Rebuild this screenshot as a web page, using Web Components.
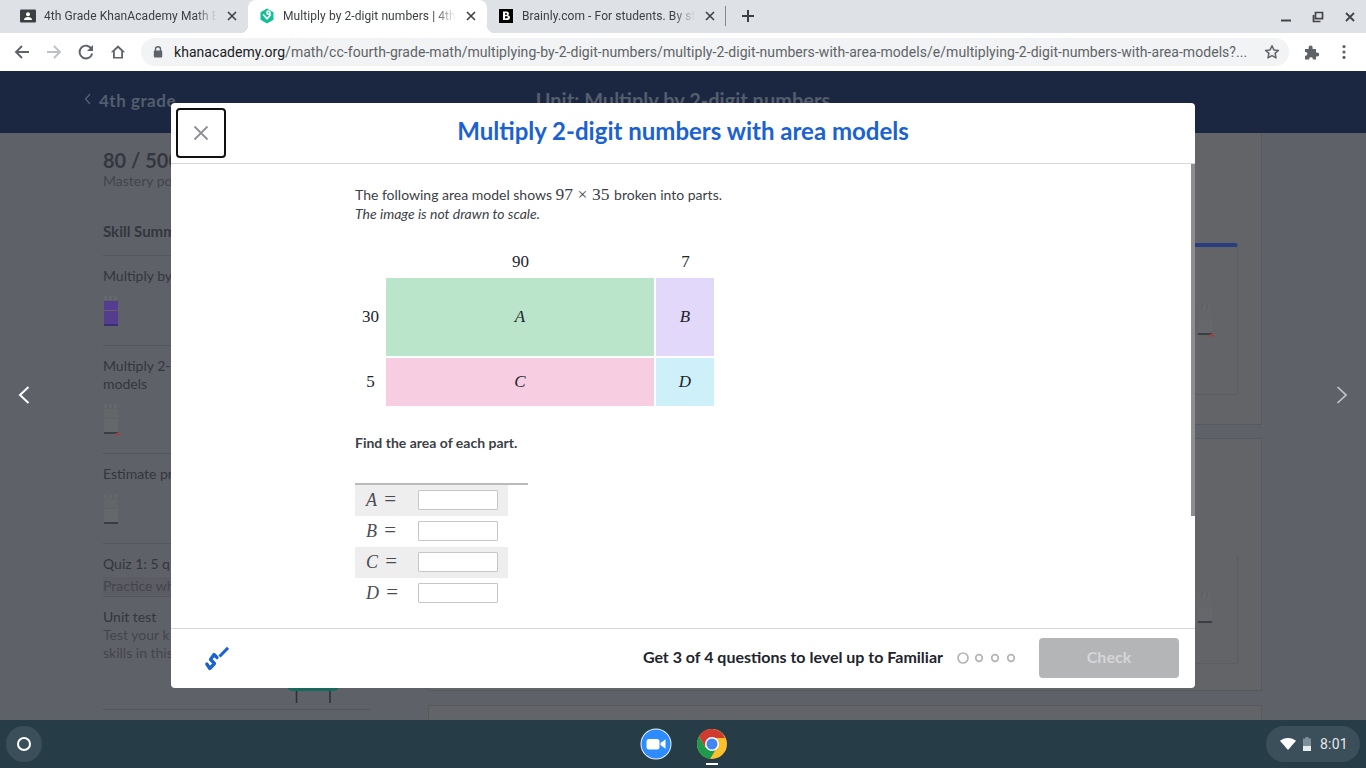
<!DOCTYPE html>
<html lang="en"><head><meta charset="utf-8"><title>Multiply 2-digit numbers with area models</title>
<style>
html,body{margin:0;padding:0;width:1366px;height:768px;overflow:hidden;background:#5f6168}
</style></head><body>
<app-shell></app-shell>
<script>
function el(name, css, html, setup){
  customElements.define(name, class extends HTMLElement{
    connectedCallback(){
      if(this.shadowRoot) return;
      const r=this.attachShadow({mode:'open'});
      r.innerHTML='<style>'+css+'</style>'+(typeof html==='function'?html(this):html);
      if(setup) setup(r,this);
    }
  });
}
const X='<svg width="10" height="10" viewBox="0 0 10 10"><path d="M1 1l8 8M9 1l-8 8" stroke="#3c4043" stroke-width="1.6" fill="none"/></svg>';

el('browser-tab',`
:host{display:flex;align-items:center;width:239px;height:33px;box-sizing:border-box;padding:0 11px 1px 11px;position:relative;font:12px Roboto,sans-serif;letter-spacing:.08px;color:#3c4043}
:host([active]){background:#fff;border-radius:8px 8px 0 0;color:#3c4043}
:host([active])::before,:host([active])::after{content:"";position:absolute;bottom:0;width:8px;height:8px;background:radial-gradient(circle at 0 0,transparent 8px,#fff 8.5px)}
:host([active])::before{left:-8px}
:host([active])::after{right:-8px;transform:scaleX(-1)}
.ic{width:16px;height:16px;flex:none;display:flex}
.t{flex:1;margin-left:8px;white-space:nowrap;overflow:hidden;-webkit-mask-image:linear-gradient(90deg,#000 calc(100% - 24px),transparent calc(100% - 2px));mask-image:linear-gradient(90deg,#000 calc(100% - 24px),transparent calc(100% - 2px))}
.x{width:10px;height:10px;flex:none;margin-left:8px;display:flex}
`,t=>`<span class="ic"><slot name="icon"></slot></span><span class="t"><slot></slot></span><span class="x">${X}</span>`);

el('tab-strip',`
:host{display:flex;align-items:flex-start;height:33px;background:#dee1e6;padding-left:9px;box-sizing:border-box}
.sep{width:1px;height:20px;background:#80868b;margin:6px 0 0 -1px}
.plus{margin:9px 0 0 15px;width:14px;height:14px;display:flex}
.sp{flex:1}
.win{display:flex;gap:16px;padding:9px 8px 0 0}
.win span{width:16px;height:16px;display:flex;align-items:center;justify-content:center}
`,`<slot></slot><span class="sep"></span>
<span class="plus"><svg width="14" height="14" viewBox="0 0 14 14"><path d="M7 1v12M1 7h12" stroke="#3c4043" stroke-width="2"/></svg></span>
<span class="sp"></span>
<span class="win">
<span><svg width="12" height="12" viewBox="0 0 12 12"><path d="M1 9.500h10" stroke="#444" stroke-width="2"/></svg></span>
<span><svg width="12" height="12" viewBox="0 0 12 12"><path d="M3.500 1.500h7v6.200h-7zM1.500 4v6.500h7" stroke="#444" stroke-width="1.700" fill="none"/></svg></span>
<span><svg width="12" height="12" viewBox="0 0 12 12"><path d="M2 2l8 8M10 2l-8 8" stroke="#444" stroke-width="1.800"/></svg></span>
</span>`);

el('browser-toolbar',`
:host{display:flex;align-items:center;height:38px;background:#fff;box-sizing:border-box;padding:0 0 0 12px}
.nav{display:flex;gap:12px;align-items:center;margin-right:13px;flex:none}
.nav span{width:20px;height:20px;display:flex}
.omni{display:flex;align-items:center;flex:none;width:1148px;height:28px;border-radius:14px;background:#f1f3f4;box-sizing:border-box;padding:0 9px 0 11px}
.url{font:14px Roboto,sans-serif;color:#5f6368;margin-left:10px;white-space:nowrap;flex:1;overflow:hidden;letter-spacing:.047px}
.url b{font-weight:400;color:#202124}
.end{display:flex;align-items:center;margin-left:15px;gap:16px;flex:none}
svg{flex:none}
`,`<div class="nav">
<span><svg width="20" height="20"><path d="M17 10H4.500M10 4l-6 6 6 6" stroke="#5f6368" stroke-width="1.900" fill="none"/></svg></span>
<span><svg width="20" height="20"><path d="M3 10h12.500M10 4l6 6-6 6" stroke="#bdc1c6" stroke-width="1.900" fill="none"/></svg></span>
<span><svg width="20" height="20"><path d="M15.600 7A6.400 6.400 0 1 0 16.200 11.500" stroke="#5f6368" stroke-width="1.900" fill="none"/><path d="M17 3v6h-6z" fill="#5f6368"/></svg></span>
<span><svg width="20" height="20"><path d="M10 3.200L2.800 10.200H5V16.600h10V10.200h2.200zM6.800 15V9l3.200-3 3.200 3v6z" fill="#5f6368"/></svg></span>
</div>
<div class="omni">
<svg width="12" height="14" viewBox="0 0 12 14"><path d="M3.500 6V4.300a2.500 2.500 0 0 1 5 0V6" stroke="#5f6368" stroke-width="1.400" fill="none"/><rect x="1.800" y="5.600" width="8.400" height="7" rx="1" fill="#5f6368"/></svg>
<span class="url"><b>khanacademy.org</b>/math/cc-fourth-grade-math/multiplying-by-2-digit-numbers/multiply-2-digit-numbers-with-area-models/e/multiplying-2-digit-numbers-with-area-models?...</span>
<svg width="16" height="16" viewBox="0 0 16 16"><path d="M8 1.800l1.900 4.100 4.500.5-3.300 3 .9 4.400L8 11.600l-4 2.200.9-4.400-3.300-3 4.500-.5z" stroke="#5f6368" stroke-width="1.500" fill="none" stroke-linejoin="round"/></svg>
</div>
<div class="end">
<svg width="16" height="16" viewBox="0 0 16 16"><path d="M1 5h3.600V3.600a2 2 0 0 1 4 0V5H12v3.500h1.200a2 2 0 0 1 0 4H12V15.500H8.800v-1a1.900 1.900 0 0 0-3.600 0v1H1v-3.800h1a2 2 0 0 0 0-3.800H1z" fill="#5f6368"/></svg>
<svg width="16" height="16" viewBox="0 0 16 16"><circle cx="8" cy="2.600" r="1.600" fill="#5f6368"/><circle cx="8" cy="8" r="1.600" fill="#5f6368"/><circle cx="8" cy="13.400" r="1.600" fill="#5f6368"/></svg>
</div>`);

el('skill-bars',`
:host{display:block;position:relative;width:14px;margin-left:1px;height:31px}
i{display:block;width:14px;margin-bottom:1px;background:#646569}
.a{height:4px;background:repeating-linear-gradient(90deg,#66676b 0 3px,#606167 3px 5px)}
.b{height:9px;margin-top:1px}
.c{height:13px;background:#66676b;margin-bottom:0}
.l{height:2px;background:#3b3d45;margin:0}
:host([kind=p]) .b,:host([kind=p]) .c{background:#543d8f}
:host([kind=p]) .l{background:#3e2e70}
:host([kind=r]) .t{position:absolute;left:11px;bottom:-1px;width:5px;height:3px;border-radius:2px;background:#94464f}
`,`<i class="a"></i><i class="b"></i><i class="c"></i><i class="l"></i><span class="t"></span>`);

el('skill-row',`
:host{display:block;box-sizing:border-box;border-bottom:1px solid #55565d;font:14px/18px Lato,sans-serif;color:#33363e;padding-top:11px}
`,`<slot></slot>`);

el('side-bar',`
:host{display:block;width:267px;margin-left:103px;flex:none;color:#33363e;font-family:Lato,sans-serif;position:relative}
.score{font:700 20px/24px Lato,sans-serif;margin-top:15px;color:#34373f}
.mp{font:14px/18px Lato,sans-serif;color:#43454c}
.sum{font:700 15px/18px Lato,sans-serif;margin:32px 0 0;padding-bottom:15px;border-bottom:1px solid #55565d}
.r1{height:90px}.r2{height:108px}.r3{height:90px}
.sk{margin-top:11px}
.q{height:53px;border-bottom:1px solid #55565d;box-sizing:border-box;padding-top:11px;font-size:14px;line-height:18px}
.q div+div{color:#43454c;margin-top:4px;background:#5c5d64}
.u{height:113px;border-bottom:1px solid #55565d;box-sizing:border-box;padding-top:11px;position:relative;font-size:14px;line-height:18px}
.u div+div{color:#43454c}
.seat{position:absolute;left:184px;top:84px;width:52px;height:24px}
`,`<div class="score">80 / 500</div><div class="mp">Mastery points</div>
<div class="sum">Skill Summary</div>
<skill-row class="r1">Multiply by<skill-bars class="sk" kind="p"></skill-bars></skill-row>
<skill-row class="r2">Multiply 2-<br>models<skill-bars class="sk" kind="r"></skill-bars></skill-row>
<skill-row class="r3">Estimate pr<skill-bars class="sk"></skill-bars></skill-row>
<div class="q"><div>Quiz 1: 5 q</div><div>Practice wh</div></div>
<div class="u"><div>Unit test</div><div>Test your k</div><div>skills in this</div>
<svg class="seat" viewBox="0 0 52 24"><path d="M0 0h52v5a5 5 0 0 1-5 5H5a5 5 0 0 1-5-5z" fill="#17695c"/><path d="M9.500 10v12M43 10v12" stroke="#2c2f36" stroke-width="1.500"/></svg></div>`);

el('main-cards',`
:host{display:block;width:834px;margin-left:58px;flex:none;position:relative}
.c{box-sizing:border-box;border:1px solid #58595f;border-top:0;background:#636468;position:relative}
.c1{height:292px}
.c2{height:253px;margin-top:13px;border-top:1px solid #58595f}
.c3{height:40px;margin-top:14px;border-top:1px solid #58595f}
.inner{position:absolute;left:0;width:809px;border-right:1px solid #5c5d62;border-bottom:1px solid #5c5d62;box-sizing:border-box}
.in1{top:110px;height:152px;border-top:4px solid #2a3d80;border-radius:3px 3px 0 0}
.in2{top:117px;height:108px}
.b{position:absolute;left:768px}
`,`<div class="c c1"><div class="inner in1"></div><skill-bars class="b" kind="r" style="top:172px"></skill-bars></div>
<div class="c c2"><div class="inner in2"></div><skill-bars class="b" style="top:154px"></skill-bars></div>
<div class="c c3"></div>`);

el('course-nav',`
:host{display:block;height:62px;background:#1b2740;position:relative;font-family:Lato,sans-serif;color:#535d6e}
.row{display:flex;height:62px;padding-left:84px;box-sizing:border-box}
.back{display:flex;align-items:flex-start;gap:8px;font:700 17px/20px Lato,sans-serif;padding-top:20px;letter-spacing:.5px;white-space:nowrap}
.back svg{margin-top:2px}
.t{position:absolute;left:0;right:0;top:17px;text-align:center;font:700 20px/24px Lato,sans-serif}
`,`<div class="row"><span class="back"><svg width="7" height="12" viewBox="0 0 7 12"><path d="M6 1L1.500 6 6 11" stroke="#555f70" stroke-width="1.300" fill="none"/></svg>4th grade</span></div><div class="t">Unit: Multiply by 2-digit numbers</div>`);

el('area-model',`
:host{display:grid;grid-template-columns:29px 268px 58px;grid-template-rows:29px 78px 48px;gap:2px;width:359px;margin-top:0;font:16px "Liberation Serif",serif;color:#21242c}
span{display:flex;align-items:center;justify-content:center}
.l{font-size:17px;padding-left:1px}
em{font-size:17px}
.a{background:#bbe5ca}.b{background:#e2d8f9}.c{background:#f7cde1}.d{background:#cdf0f9}
`,`<span></span><span class="l">90</span><span class="l">7</span>
<span class="l" style="padding-left:2px">30</span><span class="a"><em>A</em></span><span class="b"><em>B</em></span>
<span class="l" style="padding-left:2px">5</span><span class="c"><em>C</em></span><span class="d"><em>D</em></span>`);

el('answer-row',`
:host{display:flex;align-items:center;width:153px;height:31px;box-sizing:border-box;padding-left:11px}
:host([shade]){background:#eee}
.m{width:52px;font:italic 18px "Liberation Serif",serif;color:#4a4c53;white-space:nowrap}
.m i{font-style:normal;font-size:21px;line-height:18px;margin-left:2px}
input{width:80px;height:20px;box-sizing:border-box;border:1px solid #c6c6c6;background:#fff;margin:-2px 0 0;padding:0;border-radius:1px}
`,t=>`<span class="m">${t.getAttribute('v')}<i> =</i></span><input aria-label="${t.getAttribute('v')}">`);

el('exercise-body',`
:host{display:block;flex:1;min-height:0;position:relative;box-sizing:border-box;padding:21px 0 0 184px;font:14px/19px Lato,sans-serif;color:#3c3f46}
p{margin:0}
.m{font:17.500px/16px "Liberation Serif",serif;color:#3c3f46;margin-right:1px}
.m s{text-decoration:none;margin:0 4.500px}
.sc{font-style:italic;font-size:14px}
area-model{margin-top:24px}
.find{font-weight:700;margin-top:27px;font-size:14px}
.tbl{margin-top:31px;width:173px;border-top:2px solid #bbb;padding-top:0}
.bar{position:absolute;right:0;top:0;width:4px;height:352px;background:#8d8d8d}
`,`<p>The following area model shows <span class="m">97<s>×</s>35</span> broken into parts.</p>
<p class="sc">The image is not drawn to scale.</p>
<area-model></area-model>
<p class="find">Find the area of each part.</p>
<div class="tbl"><answer-row shade v="A"></answer-row><answer-row v="B"></answer-row><answer-row shade v="C"></answer-row><answer-row v="D"></answer-row></div>
<div class="bar"></div>`);

el('modal-dialog',`
:host{position:absolute;left:171px;top:32px;width:1024px;height:585px;background:#fff;border-radius:4px;display:flex;flex-direction:column;overflow:hidden;font-family:Lato,sans-serif}
header{height:61px;flex:none;box-sizing:border-box;border-bottom:1px solid #d8d8da;display:flex;align-items:center;justify-content:center;position:relative}
h1{margin:0 0 5px;font:700 24px/30px Lato,sans-serif;color:#1b62d1}
.close{position:absolute;left:5px;top:5px;width:50px;height:50px;box-sizing:border-box;border:2px solid #111;border-radius:4px;display:flex;align-items:center;justify-content:center;background:#fff}
footer{height:60px;flex:none;box-sizing:border-box;border-top:1px solid #d8d8da;display:flex;align-items:center;padding:0 16px 2px 32px}
.msg{font:700 16px/20px Lato,sans-serif;color:#21242c;margin:-2px 0 0 auto}
.dots{display:flex;align-items:center;margin:0 22px 0 14px}
.btn{width:140px;height:40px;border-radius:4px;background:#b4b5b7;color:#d5d6d7;font:700 16px/38px Lato,sans-serif;text-align:center}
`,`<header><div class="close"><svg width="16" height="16" viewBox="0 0 16 16"><path d="M1.500 1.500l13 13M14.500 1.500l-13 13" stroke="#8f9096" stroke-width="1.800"/></svg></div><h1>Multiply 2-digit numbers with area models</h1></header>
<exercise-body></exercise-body>
<footer>
<svg width="26" height="26" viewBox="0 0 26 26"><path d="M3.800 19L6.800 23.500 11.500 18.500 7.500 14.500 11 9.500 14 12.500" stroke="#1b62d1" stroke-width="3.300" fill="none" stroke-linecap="round" stroke-linejoin="round"/><path d="M16.500 11.500L25 2.800" stroke="#1b62d1" stroke-width="3"/></svg>
<span class="msg">Get 3 of 4 questions to level up to Familiar</span>
<span class="dots"><svg width="60" height="14" viewBox="0 0 60 14" fill="none" stroke="#b5b5b5" stroke-width="1.700"><circle cx="6" cy="7" r="5"/><circle cx="22" cy="7" r="3.300"/><circle cx="38" cy="7" r="3.300"/><circle cx="54" cy="7" r="3.300"/></svg></span>
<span class="btn">Check</span></footer>`);

el('page-view',`
:host{display:block;height:649px;position:relative;overflow:hidden;background:#5f6168}
.body{display:flex;height:587px}
.arr{position:absolute;top:315px}
.l{left:18px}.r{left:1336px}
`,`<course-nav></course-nav>
<div class="body"><side-bar></side-bar><main-cards></main-cards></div>
<svg class="arr l" width="12" height="18" viewBox="0 0 12 18"><path d="M10.500 1L2 9l8.500 8" stroke="#fff" stroke-width="2" fill="none"/></svg>
<svg class="arr r" width="12" height="18" viewBox="0 0 12 18"><path d="M1.500 1L10 9l-8.500 8" stroke="#c4c5c8" stroke-width="1.700" fill="none"/></svg>
<modal-dialog></modal-dialog>`);

el('os-shelf',`
:host{display:flex;align-items:center;height:48px;background:#263c47;position:relative;font:14px Roboto,sans-serif;color:#e4e8ea}
.lau{width:36px;height:36px;border-radius:50%;background:#3a4f59;margin-left:6px;display:flex;align-items:center;justify-content:center}
.apps{position:absolute;left:640px;top:8px;display:flex;gap:24px}
.apps svg{display:block}
.dot{position:absolute;left:66px;top:35px;width:12px;height:2px;background:#fff}
.tray{margin-left:auto;margin-right:6px;width:94px;height:36px;border-radius:18px;background:#3a4f59;display:flex;align-items:center;box-sizing:border-box;padding-left:14px}
.tm{margin-left:8px;letter-spacing:.2px}
`,`<span class="lau"><svg width="16" height="16" viewBox="0 0 16 16"><circle cx="8" cy="8" r="6" stroke="#fff" stroke-width="2" fill="none"/></svg></span>
<div class="apps">
<svg width="32" height="32" viewBox="0 0 32 32"><circle cx="16" cy="16" r="15.500" fill="#e7f1fb"/><circle cx="16" cy="16" r="14.500" fill="#2d8cff"/><rect x="6.500" y="11" width="13" height="10.500" rx="2.500" fill="#fff"/><path d="M20.500 15l5-3.800v9.600l-5-3.800z" fill="#fff"/></svg>
<svg width="32" height="32" viewBox="0 0 32 32"><circle cx="16" cy="16" r="15" fill="#fbc02d"/><path d="M16 1A15 15 0 0 0 3 8.500L9 19l7-9h13A15 15 0 0 0 16 1z" fill="#d2392f"/><path d="M3 8.500A15 15 0 0 0 14 30.900L20 21l-8-1-3-1z" fill="#1e9a4c"/><circle cx="16" cy="16" r="7" fill="#fff"/><circle cx="16" cy="16" r="5.500" fill="#4385f0"/></svg>
<span class="dot"></span></div>
<div class="tray">
<svg width="16" height="12" viewBox="0 0 16 12"><path d="M0 2.800C2 1.100 5 0 8 0s6 1.100 8 2.800L8 12z" fill="#fff"/></svg>
<svg width="10" height="14" viewBox="0 0 10 14" style="margin-left:6px"><path d="M3.500 0h3v1.500H9V14H1V1.500h2.500z" fill="#7f8f97"/><rect x="1" y="9" width="8" height="5" fill="#e5edf0"/></svg>
<span class="tm">8:01</span></div>`);

const cls='<svg slot="icon" width="16" height="16" viewBox="0 0 16 16"><rect y="1.500" width="16" height="13" rx="1" fill="#3c4043"/><circle cx="8" cy="6.300" r="2" fill="#fff"/><path d="M4 12c0-2 2-2.900 4-2.900s4 .9 4 2.900z" fill="#fff"/></svg>';
const ka='<svg slot="icon" width="16" height="16" viewBox="0 0 16 16"><path d="M8 .5l6.500 3.700v7.600L8 15.500l-6.500-3.700V4.200z" fill="#14bf96"/><path d="M4.200 6.500L8 10.800l3.800-4.300M8 4.600a1.500 1.500 0 1 1 0 .1" stroke="#fff" stroke-width="1.700" fill="none"/></svg>';
const br='<svg slot="icon" width="16" height="16" viewBox="0 0 16 16"><rect x="1" y="1" width="14" height="14" fill="#000"/><path d="M5 3.500h4a2 2 0 0 1 1 3.700 2.300 2.300 0 0 1-1 4.800H5zM7 5.200v1.500h1.500a.75.75 0 0 0 0-1.500zM7 8.300v2h1.800a1 1 0 0 0 0-2z" fill="#fff" fill-rule="evenodd"/></svg>';

el('app-shell',`:host{display:flex;flex-direction:column;width:1366px;height:768px;overflow:hidden}`,
`<tab-strip>
<browser-tab>${cls}4th Grade KhanAcademy Math E</browser-tab>
<browser-tab active>${ka}Multiply by 2-digit numbers | 4th</browser-tab>
<browser-tab>${br}Brainly.com - For students. By st</browser-tab>
</tab-strip>
<browser-toolbar></browser-toolbar>
<page-view></page-view>
<os-shelf></os-shelf>`);
</script>
</body></html>
